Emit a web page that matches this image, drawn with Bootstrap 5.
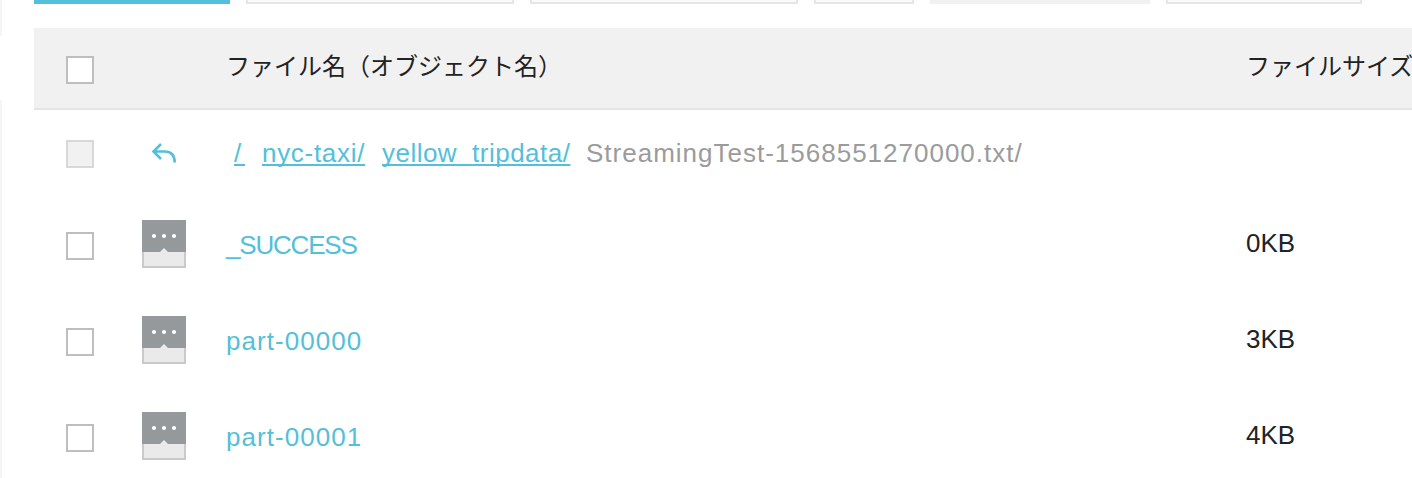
<!DOCTYPE html>
<html lang="ja">
<head>
<meta charset="utf-8">
<title>ファイル一覧</title>
<link href="https://cdn.jsdelivr.net/npm/bootstrap@5.3.0/dist/css/bootstrap.min.css" rel="stylesheet">
<style>
body{font-family:"Liberation Sans","Noto Sans CJK JP",sans-serif;font-size:26px;line-height:32px;color:#222;background:#fff;width:1412px;height:478px}
a{color:#54bfda;text-decoration:none}
.side-rail{width:2px}
.side-rail div{background:#f5f5f5}
.rail-top{height:36px;margin-bottom:64px}
.main-pane{margin-left:32px;width:1378px}
.tool-row{height:28px;gap:16px}
.tool{height:4px;background:#fafafa;border:2px solid #e5e5e5;border-top:0;flex:none}
.tool-primary{background:#54bfda;border:0}
.tool-muted{background:#f1f1f1;border:0}
.file-row{display:grid;grid-template-columns:76px 84px 1020px 1fr;padding-left:32px;height:96px;align-items:center;white-space:nowrap}
.head-row{height:82px;background:#f1f1f1;border-bottom:2px solid #e5e5e5;font-family:"Noto Sans CJK JP",sans-serif;font-size:24px}
.path-row{height:86px}
.check-box{width:28px;height:28px;border:2px solid #bebebe;background:#fff;margin-top:4px}
.path-row .check-box{border-color:#d8d8d8;background:#f1f1f1;margin-top:2px}
.head-row .label{margin-top:-6px}
.crumbs{color:#9b9b9b}
.crumbs a{text-decoration:underline;text-decoration-thickness:2px;text-underline-offset:2px;text-decoration-skip-ink:none}
.c-root{margin-left:8px;width:28px;letter-spacing:3.8px}
.c-nyc{width:120px;letter-spacing:.7px}
.c-yellow{width:204px;letter-spacing:.48px}
.c-under{color:transparent}
.c-leaf{letter-spacing:1px}
.n-success{letter-spacing:-1.2px}
.n-part{letter-spacing:1.05px}
.size{margin-top:-3px}
.name{margin-top:1px}
</style>
</head>
<body class="overflow-hidden">
<div class="d-flex h-100">
  <div class="side-rail d-flex flex-column"><div class="rail-top"></div><div class="flex-fill"></div></div>
  <main class="main-pane">
    <div class="tool-row d-flex">
      <div class="tool tool-primary" style="width:196px"></div>
      <div class="tool" style="width:268px"></div>
      <div class="tool" style="width:268px"></div>
      <div class="tool" style="width:100px"></div>
      <div class="tool tool-muted" style="width:220px"></div>
      <div class="tool" style="width:196px"></div>
    </div>
    <div class="file-row head-row">
      <span class="check-box"></span><span></span>
      <span class="label">ファイル名（オブジェクト名）</span>
      <span class="label">ファイルサイズ</span>
    </div>
    <div class="file-row path-row">
      <span class="check-box"></span>
      <svg class="ms-2" width="28" height="28" viewBox="150 139 28 28" fill="none" stroke="#54bfda" stroke-width="2.6"><path d="M161 144 153.5 151.5 161 159M153.5 151.5H164.5Q174.7 151.5 174.7 162.5"/></svg>
      <div class="crumbs d-flex"><span class="c-root"><a href="#">/</a></span><span class="c-nyc"><a href="#">nyc-taxi/</a></span><span class="c-yellow"><a href="#">yellow<span class="c-under">_</span>tripdata/</a></span><span class="c-leaf">StreamingTest-1568551270000.txt/</span></div>
    </div>
    <div class="file-row">
      <span class="check-box"></span>
      <svg width="44" height="48" viewBox="0 0 44 48"><path fill="#cacaca" d="M0 32h44v16H0z"/><path fill="#eaeaea" d="M2 32h40v14H2z"/><path fill="#96999c" d="M0 0h44v32H0z"/><path fill="#eaeaea" d="M18 32 22 28 26 32z"/><g fill="#fff"><circle cx="12" cy="16" r="2.1"/><circle cx="22" cy="16" r="2.1"/><circle cx="32" cy="16" r="2.1"/></g></svg>
      <a class="name n-success" href="#">_SUCCESS</a><span class="size">0KB</span>
    </div>
    <div class="file-row">
      <span class="check-box"></span>
      <svg width="44" height="48" viewBox="0 0 44 48"><path fill="#cacaca" d="M0 32h44v16H0z"/><path fill="#eaeaea" d="M2 32h40v14H2z"/><path fill="#96999c" d="M0 0h44v32H0z"/><path fill="#eaeaea" d="M18 32 22 28 26 32z"/><g fill="#fff"><circle cx="12" cy="16" r="2.1"/><circle cx="22" cy="16" r="2.1"/><circle cx="32" cy="16" r="2.1"/></g></svg>
      <a class="name n-part" href="#">part-00000</a><span class="size">3KB</span>
    </div>
    <div class="file-row">
      <span class="check-box"></span>
      <svg width="44" height="48" viewBox="0 0 44 48"><path fill="#cacaca" d="M0 32h44v16H0z"/><path fill="#eaeaea" d="M2 32h40v14H2z"/><path fill="#96999c" d="M0 0h44v32H0z"/><path fill="#eaeaea" d="M18 32 22 28 26 32z"/><g fill="#fff"><circle cx="12" cy="16" r="2.1"/><circle cx="22" cy="16" r="2.1"/><circle cx="32" cy="16" r="2.1"/></g></svg>
      <a class="name n-part" href="#">part-00001</a><span class="size">4KB</span>
    </div>
  </main>
</div>
<script src="https://cdn.jsdelivr.net/npm/bootstrap@5.3.0/dist/js/bootstrap.bundle.min.js"></script>
</body>
</html>
